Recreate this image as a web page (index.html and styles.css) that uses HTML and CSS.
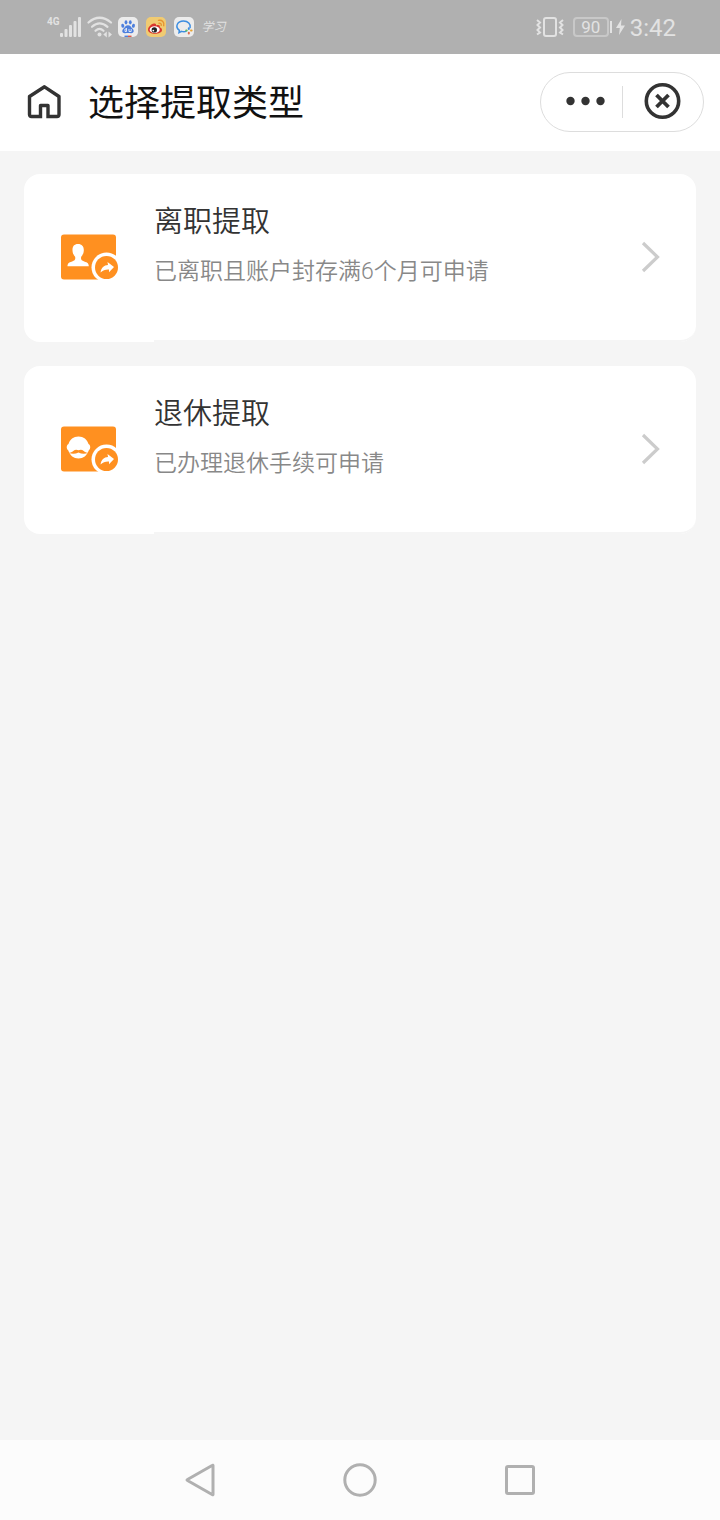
FILE: index.html
```html
<!DOCTYPE html>
<html lang="zh-CN">
<head>
    <meta charset="UTF-8">
    <meta name="viewport" content="width=device-width, initial-scale=1.0">
    <title>选择提取类型</title>
    <link rel="stylesheet" href="styles.css">
</head>
<body>

    <!-- 状态栏 -->
    <div class="status-bar">
        <div class="status-left">
            <span class="network">4G</span>
            <svg class="signal" width="22" height="22" viewBox="0 0 22 22" fill="#e2e2e2">
                <rect x="0" y="17" width="3" height="4" rx="1"/>
                <rect x="4.5" y="13" width="3" height="8" rx="1"/>
                <rect x="9" y="9" width="3" height="12" rx="1"/>
                <rect x="13.5" y="5" width="3" height="16" rx="1"/>
                <rect x="18" y="1" width="3" height="20" rx="1"/>
            </svg>
            <svg class="wifi" width="26" height="22" viewBox="0 0 26 22" fill="none" stroke="#e2e2e2" stroke-width="2.2" stroke-linecap="round">
                <path d="M1.500 6.500Q12.500 -3 24 6.500"/>
                <path d="M5 10.800Q12.500 4 20.500 10.800"/>
                <path d="M8.500 14.800Q12.500 11 16.500 14.800"/>
                <circle cx="12.500" cy="18.500" r="2" fill="#e2e2e2" stroke="none"/>
                <path d="M16.300 18.500l3.500-3v6zM25 18.500l-3.500-3v6z" fill="#e2e2e2" stroke="none"/>
            </svg>
            <svg width="20" height="22" viewBox="0 0 20 22">
                <rect y="1" width="20" height="20" rx="5" fill="#ececec"/>
                <g fill="#4d7fdd">
                    <ellipse cx="4.800" cy="9.800" rx="1.500" ry="2" transform="rotate(-15 4.800 9.800)"/>
                    <ellipse cx="8" cy="6.300" rx="1.400" ry="2.100"/>
                    <ellipse cx="12.300" cy="6.300" rx="1.400" ry="2.100"/>
                    <ellipse cx="15.400" cy="9.800" rx="1.500" ry="2" transform="rotate(15 15.400 9.800)"/>
                    <path d="M10 9.300c2.300 0 3 1.900 4.400 3.200 2.400 2.200 1.200 4.900-1.400 4.700-2-.2-4-.2-6 0-2.600.2-3.800-2.500-1.400-4.700C7 11.200 7.700 9.300 10 9.300z"/>
                </g>
                <path d="M8.500 12v3.500M8.500 13H7v2.500h1.500M11 13v2.500h2.200V13" fill="none" stroke="#e6ecf7" stroke-width=".9"/>
                <path d="M6.500 20.300h3.500" stroke="#4d7fdd" stroke-width="1.400"/>
                <path d="M10 20.300h3.500" stroke="#dd5548" stroke-width="1.400"/>
            </svg>
            <svg width="20" height="22" viewBox="0 0 20 22">
                <rect y="1" width="20" height="20" rx="5" fill="#f0cb72"/>
                <path d="M8 7.500C5 8 2 11.300 2 13.700c0 5.400 14 5.300 14 .2 0-1.500-1-2-2.200-2.600.5-2.200-1.300-2.700-3.800-1.700.4-1.500-.4-2.400-2-2.100z" fill="#d9372f"/>
                <ellipse cx="8.700" cy="13.700" rx="5" ry="3.400" fill="#fff"/>
                <circle cx="8.300" cy="13.900" r="2.700" fill="#222"/>
                <circle cx="7.300" cy="14.600" r=".9" fill="#fff"/>
                <path d="M12.500 4.400c3.500-.8 6.200 1.800 5.200 5.300M13 7.200c1.600-.3 2.600.7 2.200 2.200" fill="none" stroke="#e7942f" stroke-width="1.400" stroke-linecap="round"/>
            </svg>
            <svg width="20" height="22" viewBox="0 0 20 22">
                <rect y="1" width="20" height="20" rx="5" fill="#ececec"/>
                <path d="M12 15.400c-1.500.5-3 .4-4.400 0L5 16.700l.4-2.400C.4 10.500 3.600 5 9.500 5c4.600 0 7.300 3.200 6.600 6.500" fill="none" stroke="#3b8de0" stroke-width="1.500" stroke-linecap="round"/>
                <g stroke-width="2" stroke-linecap="round">
                    <path d="M14.800 12.200v.8" stroke="#3b8de0"/>
                    <path d="M17 14.400h.6" stroke="#e9a32f"/>
                    <path d="M14.800 16.800v.6" stroke="#df6a4a"/>
                    <path d="M12.200 14.600h.5" stroke="#5dbb63"/>
                </g>
            </svg>
            <span class="study">学习</span>
        </div>
        <div class="status-right">
            <svg class="vibrate" width="28" height="22" viewBox="0 0 28 22" fill="none" stroke="#e2e2e2">
                <rect x="8" y="2" width="12" height="18" rx="2" stroke-width="2"/>
                <path d="M1 4l3 2.500L1.500 9 4 11.500 1.500 14 4 16.500 1 18.500M27 4l-3 2.500L26.500 9 24 11.500l2.500 2.500-2.500 2.500 3 2" stroke-width="2"/>
            </svg>
            <span class="battery">90</span>
            <span class="battery-tip"></span>
            <svg class="bolt" width="9" height="18" viewBox="0 0 9 18" fill="#e2e2e2">
                <path d="M5.500 1L0 10h3.800L3 17l6-9.500H5z"/>
            </svg>
            <span class="clock">3:42</span>
        </div>
    </div>

    <!-- 标题栏 -->
    <header class="header">
        <button class="home-btn" type="button" aria-label="首页">
            <svg width="34" height="36" viewBox="0 0 34 36" fill="none" stroke="#333" stroke-width="3.400" stroke-linejoin="round">
                <path d="M13.500 32.500H4.500q-2 0-2-2V12.500L17.500 2.800 32 12.500v18q0 2-2 2H21V21.500h-7.500V34.200M21 34.200V32.500"/>
            </svg>
        </button>
        <h1 class="title">选择提取类型</h1>
        <div class="capsule">
            <button class="capsule-btn" type="button" aria-label="更多">
                <svg width="48" height="40" viewBox="0 0 48 40" fill="#333">
                    <circle cx="12.500" cy="19" r="4.200"/>
                    <circle cx="27.500" cy="19" r="4.200"/>
                    <circle cx="42.500" cy="19" r="4.200"/>
                </svg>
            </button>
            <button class="capsule-btn" type="button" aria-label="关闭">
                <svg width="40" height="40" viewBox="0 0 40 40" fill="none" stroke="#333">
                    <circle cx="19.500" cy="19" r="16.200" stroke-width="3.600"/>
                    <path d="M13.500 13l12 12M25.500 13l-12 12" stroke-width="3.800"/>
                </svg>
            </button>
        </div>
    </header>

    <!-- 提取类型列表 -->
    <main class="list">
        <a class="card" href="#">
            <svg class="card-icon" width="60" height="48" viewBox="0 0 60 48">
                <rect x="1" y="0.500" width="55" height="45" rx="3" fill="#ff9020"/>
                <path d="M18 10c4 0 6 2.600 5.800 6.500-.1 3-1.300 4.500-2.600 6.300-.6 2.800.2 3.700 3 4.600 3.600 1.100 4.600 2.200 4.600 4.900H7.500c0-2.700 1-3.800 4.600-4.900 2.800-.9 3.600-1.800 3-4.600-1.300-1.800-2.500-3.300-2.600-6.300-.2-3.900 1.500-6.500 5.500-6.500z" fill="#fff"/>
                <circle cx="46.500" cy="33.500" r="15" fill="#fff"/>
                <circle cx="46.500" cy="33.500" r="11.500" fill="#ff9020"/>
                <path d="M47.500 28l6.500 5-5 5.200v-2.700c-3.500-.2-6 .7-8.500 3 .8-4.800 3.500-7.300 7.500-7.500z" fill="#fff"/>
            </svg>
            <div class="card-body">
                <div class="card-text">
                    <h2 class="card-title">离职提取</h2>
                    <p class="card-desc">已离职且账户封存满6个月可申请</p>
                </div>
                <svg class="arrow" width="20" height="32" viewBox="0 0 20 32" fill="none" stroke="#ccc" stroke-width="3.200">
                    <path d="M2 2l14.500 14L2 30"/>
                </svg>
            </div>
        </a>
        <a class="card" href="#">
            <svg class="card-icon" width="60" height="48" viewBox="0 0 60 48">
                <rect x="1" y="0.500" width="55" height="45" rx="3" fill="#ff9020"/>
                <path d="M18.500 10.500c5 0 8.800 3 10 7.500 2.300 1.200 2.300 5 .2 6.500-1.700 5-5.400 8-10.200 8s-8.500-3-10.200-8c-2.100-1.500-2.100-5.300.2-6.500 1.200-4.500 5-7.500 10-7.500z" fill="#fff"/>
                <path d="M18.500 24.300c1.700-1 3.700-.8 5.200.6 1.200 1.200 2.600 1.800 4.600 1.900-3.300 1.500-6.800 1.300-9.800-.4-3 1.700-6.500 1.900-9.800.4 2-.1 3.400-.7 4.600-1.900 1.500-1.400 3.500-1.600 5.200-.6z" fill="#ff9020"/>
                <circle cx="46.500" cy="33.500" r="15" fill="#fff"/>
                <circle cx="46.500" cy="33.500" r="11.500" fill="#ff9020"/>
                <path d="M47.500 28l6.500 5-5 5.200v-2.700c-3.500-.2-6 .7-8.500 3 .8-4.800 3.500-7.300 7.500-7.500z" fill="#fff"/>
            </svg>
            <div class="card-body">
                <div class="card-text">
                    <h2 class="card-title">退休提取</h2>
                    <p class="card-desc">已办理退休手续可申请</p>
                </div>
                <svg class="arrow" width="20" height="32" viewBox="0 0 20 32" fill="none" stroke="#ccc" stroke-width="3.200">
                    <path d="M2 2l14.500 14L2 30"/>
                </svg>
            </div>
        </a>
    </main>

    <!-- 系统导航键 -->
    <nav class="nav-bar">
        <button class="nav-btn" type="button" aria-label="返回">
            <svg width="36" height="36" viewBox="0 0 36 36" fill="none" stroke="#b0b0b0" stroke-width="3" stroke-linejoin="round">
                <path d="M31 3.500v29Q31 33 30.500 32.700L5.500 18.500Q4.500 18 5.500 17.500L30.500 3.300q.5-.3.500.2z"/>
            </svg>
        </button>
        <button class="nav-btn" type="button" aria-label="主屏幕">
            <svg width="36" height="36" viewBox="0 0 36 36" fill="none" stroke="#b0b0b0" stroke-width="3">
                <circle cx="18" cy="18" r="15.200"/>
            </svg>
        </button>
        <button class="nav-btn" type="button" aria-label="最近任务">
            <svg width="36" height="36" viewBox="0 0 36 36" fill="none" stroke="#b0b0b0" stroke-width="3">
                <rect x="4.500" y="4.500" width="27" height="27" rx="1.500"/>
            </svg>
        </button>
    </nav>

</body>
</html>
```

FILE: styles.css
```css
/* 全局样式 */
* {
    box-sizing: border-box;
}

body {
    display: flex;
    flex-direction: column;
    min-height: 100vh;
    margin: 0;
    background-color: #f5f5f5;
    font-family: Roboto, "Noto Sans CJK SC", sans-serif;
}

svg {
    display: block;
    flex-shrink: 0;
}

button {
    display: flex;
    align-items: center;
    justify-content: center;
    padding: 0;
    border: none;
    background: none;
    cursor: pointer;
}

/* 状态栏 */
.status-bar {
    display: flex;
    align-items: center;
    justify-content: space-between;
    height: 54px;
    padding: 0 44px 0 47px;
    background-color: #b0b0b0;
    color: #e2e2e2;
}

.status-left,
.status-right {
    display: flex;
    align-items: center;
}

.status-left {
    gap: 8px;
}

.network {
    align-self: flex-start;
    margin-right: -8px;
    font-size: 10px;
    font-weight: 700;
    line-height: 12px;
}

.signal,
.wifi {
    margin-right: -3px;
}

.study {
    font-size: 12px;
    font-style: italic;
    line-height: 16px;
}

.battery {
    width: 36px;
    margin-left: 9px;
    border: 2px solid #c8c8c8;
    border-radius: 4px;
    font-size: 17px;
    line-height: 16px;
    text-align: center;
}

.battery-tip {
    width: 2px;
    height: 12px;
    margin-left: 1px;
    background-color: #e2e2e2;
}

.bolt {
    margin: 0 5px 0 4px;
}

.clock {
    padding-top: 2px;
    font-size: 24px;
    line-height: 28px;
}

/* 标题栏 */
.header {
    display: flex;
    align-items: center;
    height: 97px;
    padding: 0 16px 2px 27px;
    background-color: #fff;
}

.title {
    flex: 1;
    margin: 0 0 0 27px;
    padding-top: 4px;
    color: #111;
    font-size: 36px;
    font-weight: 400;
    line-height: 48px;
}

.capsule {
    display: flex;
    width: 164px;
    height: 60px;
    border: 1px solid #ddd;
    border-radius: 30px;
}

.capsule-btn {
    flex: 1;
}

.capsule-btn + .capsule-btn::before {
    content: "";
    width: 1px;
    height: 32px;
    margin-right: auto;
    background-color: #ddd;
}

.capsule-btn + .capsule-btn svg {
    margin-right: auto;
}

/* 卡片 */
.list {
    display: flex;
    flex: 1;
    flex-direction: column;
    gap: 24px;
    padding: 23px 24px;
}

.card {
    display: flex;
    align-items: center;
    padding-left: 36px;
    border-radius: 16px;
    background-color: #fff;
    text-decoration: none;
}

.card-icon {
    margin-right: 34px;
}

.card-body {
    display: flex;
    flex: 1;
    align-items: center;
    justify-content: space-between;
    height: 168px;
    padding-right: 35px;
    border-bottom: 2px solid #f5f5f5;
    border-radius: 0 0 16px 0;
}

.card-text {
    align-self: flex-start;
    padding-top: 26px;
}

.card-title {
    margin: 0 0 12px;
    color: #333;
    font-size: 29px;
    font-weight: 350;
    line-height: 44px;
}

.card-desc {
    margin: 0;
    color: #888;
    font-size: 23px;
    font-weight: 350;
    line-height: 32px;
}

/* 系统导航键 */
.nav-bar {
    display: flex;
    justify-content: center;
    height: 80px;
    background-color: #fcfcfc;
}

.nav-btn {
    width: 160px;
}
```
